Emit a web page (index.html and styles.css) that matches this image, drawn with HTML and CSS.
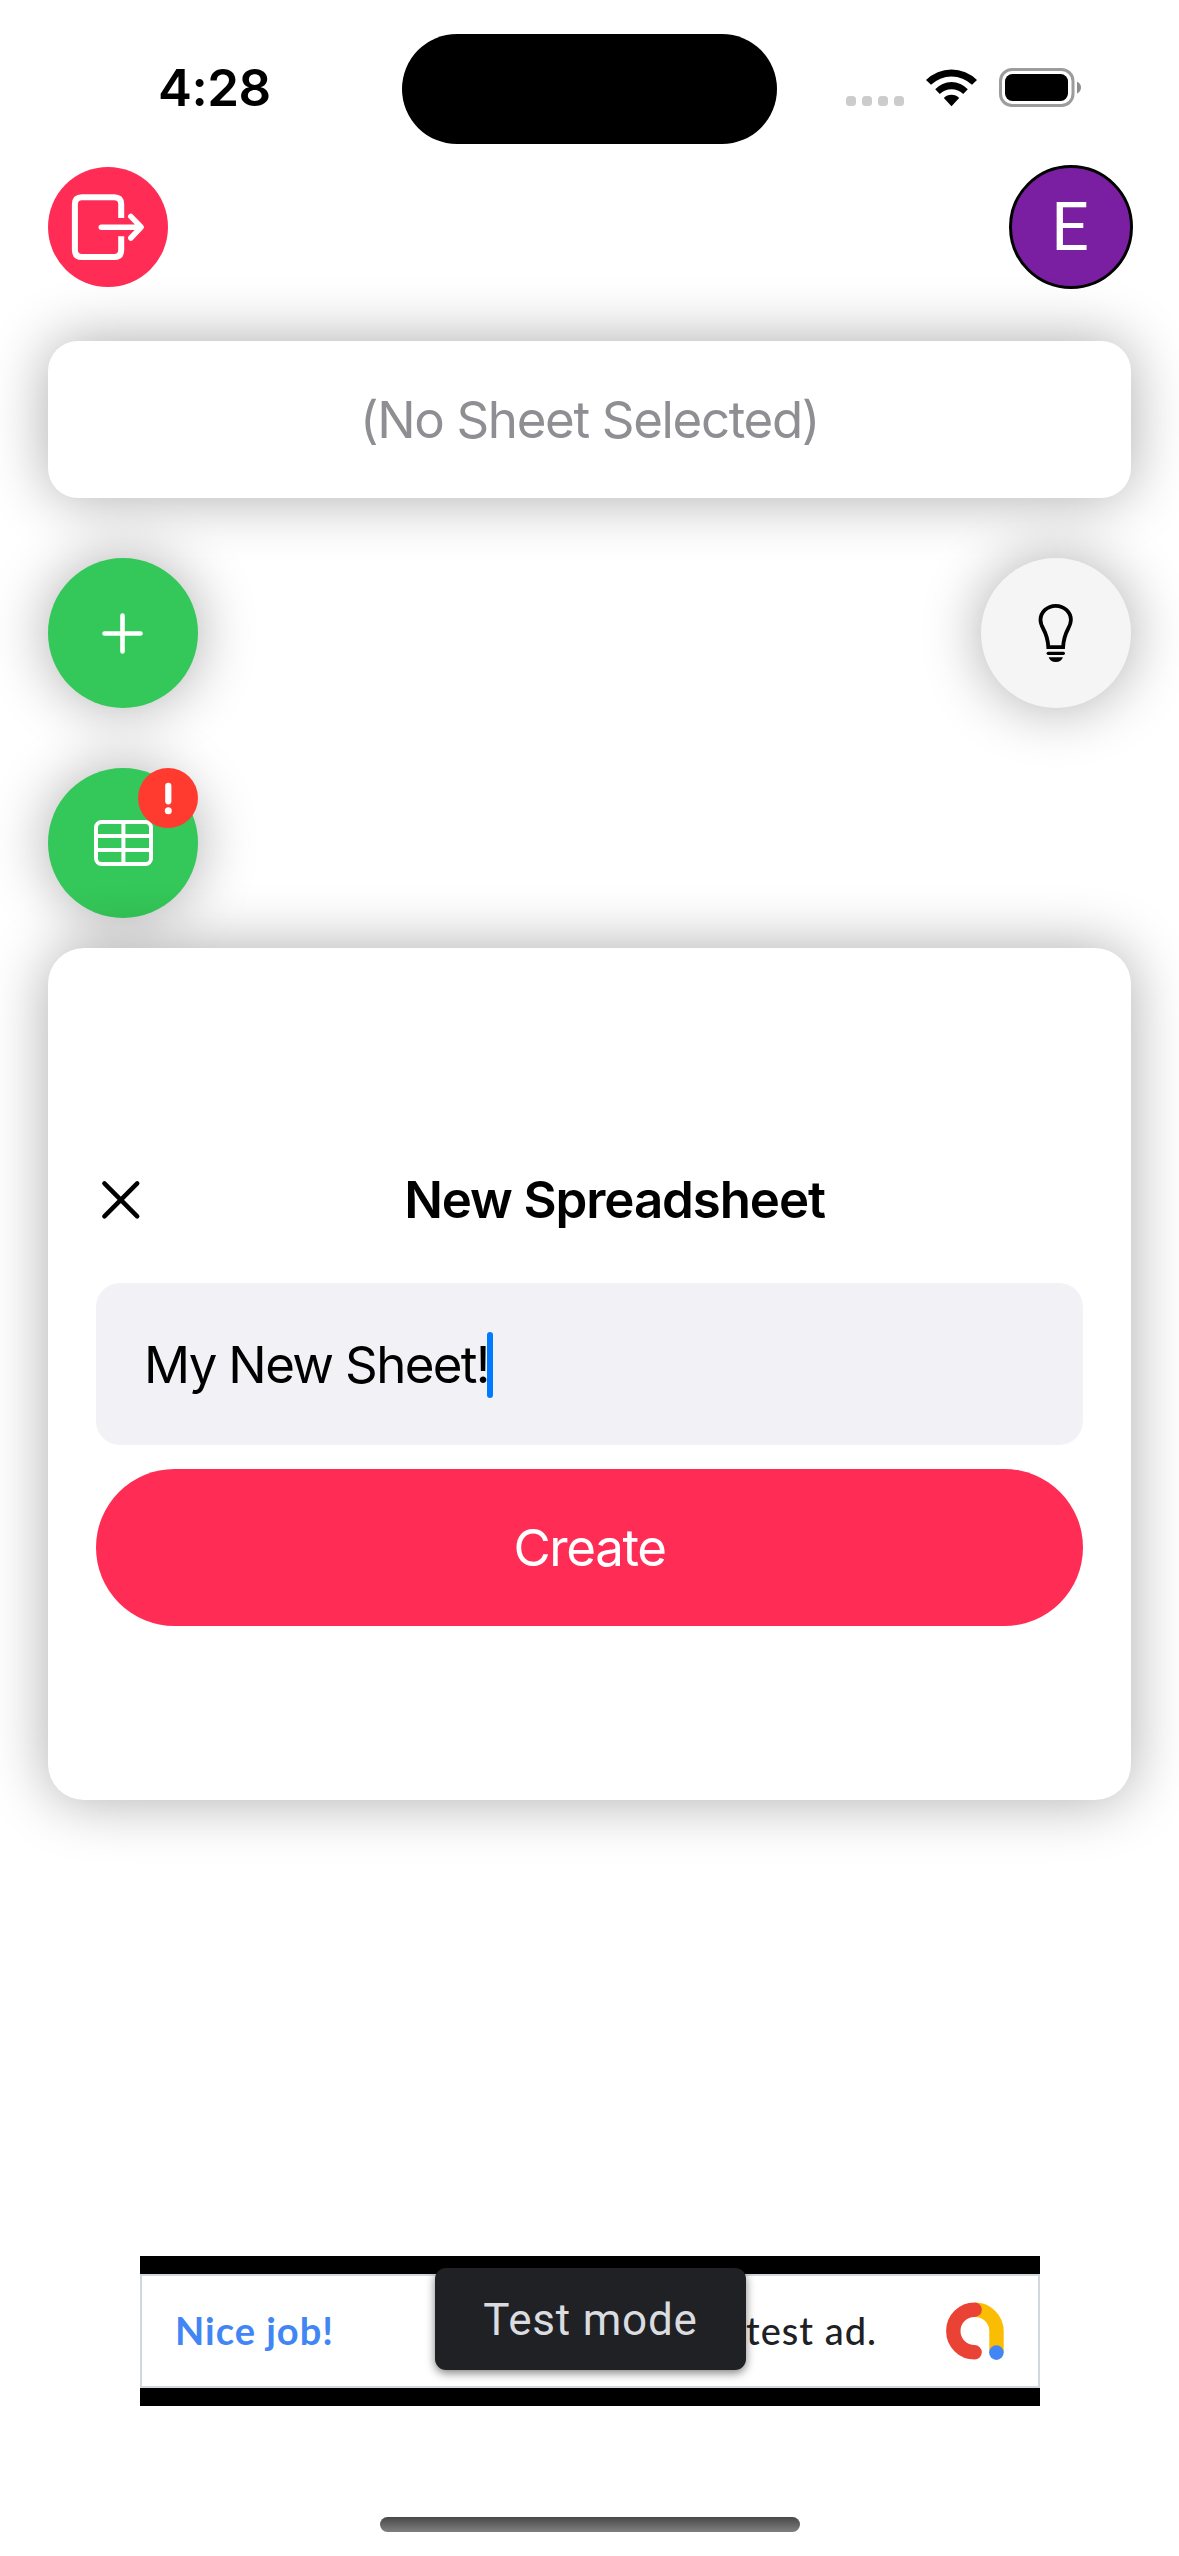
FILE: index.html
```html
<!DOCTYPE html>
<html lang="en">
<head>
<meta charset="utf-8">
<title>New Spreadsheet</title>
<link rel="stylesheet" href="styles.css">
</head>
<body>
<div class="screen">
  <header class="status">
    <div class="status-time"><span class="time">4:28</span></div>
    <div class="island"></div>
    <div class="status-icons">
      <div class="dots"><i></i><i></i><i></i><i></i></div>
      <svg class="wifi" width="51" height="38" viewBox="0 0 51 38">
        <path d="M0 11A36 36 0 0 1 51 11L46 15.8A29.7 29.7 0 0 0 5 15.8Z"/>
        <path d="M9.2 20.3A22 22 0 0 1 41.8 20.3L37.2 25A16.5 16.5 0 0 0 13.8 25Z"/>
        <path d="M17.8 29A11 11 0 0 1 33.2 29L25.5 37.2Z"/>
      </svg>
      <svg class="battery" width="83" height="40" viewBox="0 0 83 40">
        <rect x="1.5" y="1.5" width="72.5" height="36" rx="11.5" fill="none" stroke="#9c9c9c" stroke-width="3"/>
        <rect x="6" y="6" width="63" height="27" rx="7.5"/>
        <path d="M78 13.5Q82 15.5 82 19.5T78 25.5Z" fill="#8e8e8e"/>
      </svg>
    </div>
  </header>

  <nav class="topbar">
    <button class="logout" aria-label="Sign out">
      <svg width="120" height="120" viewBox="48 167 120 120" fill="none" stroke="#fff" stroke-width="6">
        <path d="M121.200 218V204.200Q121.200 197.200 114.200 197.200H81.900Q74.900 197.200 74.900 204.200V250Q74.900 257 81.900 257H114.200Q121.200 257 121.200 250V236.300"/>
        <path d="M101.300 227.200H140M130.800 216.400L141.200 227.200L130.800 238" stroke-width="5.500" stroke-linecap="round" stroke-linejoin="round"/>
      </svg>
    </button>
    <div class="avatar"><span>E</span></div>
  </nav>

  <main class="content">
    <div class="card sheet">(No Sheet Selected)</div>
    <div class="row">
      <button class="round green" aria-label="Add">
        <svg width="150" height="150" viewBox="0 0 150 150"><path d="M56.500 75.500H92.500M74.500 57.500V93.500" fill="none" stroke="#fff" stroke-width="4.600" stroke-linecap="round"/></svg>
      </button>
      <button class="round light" aria-label="Tips">
        <svg width="150" height="150" viewBox="981 558 150 150">
          <path d="M1048.300 647.200C1047.500 630 1040.500 628.500 1040.500 620A15.200 14.200 0 0 1 1070.900 620C1070.900 628.500 1063.900 630 1063.100 647.200Z" fill="none" stroke="#000" stroke-width="3.800"/>
          <path d="M1048.200 653.300H1063.400" stroke="#000" stroke-width="3.200" stroke-linecap="round"/>
          <path d="M1048.700 657.300H1062.900Q1061.500 662 1055.800 662T1048.700 657.300Z"/>
        </svg>
      </button>
    </div>
    <button class="round green sheets" aria-label="Spreadsheets">
      <svg width="150" height="150" viewBox="48 768 150 150" fill="none" stroke="#fff" stroke-width="4">
        <rect x="96" y="822" width="55" height="42" rx="5.500"/>
        <path d="M96 836H151M96 850H151M123.400 822V864"/>
      </svg>
      <span class="badge">
        <svg width="60" height="60" viewBox="138 768 60 60"><path d="M168.300 785.800V801.300" stroke="#fff" stroke-width="6.200" stroke-linecap="round"/><circle cx="168.300" cy="810.700" r="3.500" fill="#fff"/></svg>
      </span>
    </button>

    <section class="card panel">
      <div class="panel-head">
        <svg width="50" height="50" viewBox="96 1175.500 50 50"><path d="M104.400 1183.900L137.200 1216.900M137.200 1183.900L104.400 1216.900" fill="none" stroke="#000" stroke-width="4.500" stroke-linecap="round"/></svg>
        <h1><span>New Spreadsheet</span></h1>
      </div>
      <div class="field"><span class="value">My New Sheet!</span><i class="caret"></i></div>
      <button class="create"><span>Create</span></button>
    </section>
  </main>

  <aside class="ad">
    <div class="ad-body">
      <span class="nice">Nice job!</span>
      <span class="desc">test ad.</span>
      <svg class="admob" width="60" height="60" viewBox="945 2301 60 60" fill="none" stroke-width="14.400">
        <path d="M975 2309.700A21.500 21.500 0 0 1 996.500 2331.200V2352.300" stroke="#fbbc04"/>
        <path d="M974.600 2309.700A21.300 21.300 0 1 0 974.600 2352.300" stroke="#ea4335" stroke-linecap="round"/>
        <circle cx="996.400" cy="2352.600" r="7.300" fill="#4285f4"/>
      </svg>
    </div>
    <div class="test"><span>Test mode</span></div>
  </aside>
  <div class="home"></div>
</div>
</body>
</html>
```
FILE: styles.css
```css
* { box-sizing: border-box; }
body { margin: 0; background: #fff; }
.screen {
  width: 1179px;
  height: 2556px;
  overflow: hidden;
  display: flex;
  flex-direction: column;
  font-family: Inter, "Liberation Sans", sans-serif;
  font-size: 51px;
  line-height: 62px;
  color: #000;
}
button {
  border: 0;
  padding: 0;
  margin: 0;
  font: inherit;
  color: inherit;
}
svg { display: block; flex: none; }

.status {
  height: 165px;
  padding-top: 33px;
  display: grid;
  grid-template-columns: 402px 375px 402px;
  align-items: start;
}
.status-time { padding: 24px 0 0 158px; }
.time { font-weight: 600; letter-spacing: -.5px; }
.island { height: 110px; margin-top: 1px; border-radius: 55px; background: #000; }
.status-icons { display: flex; align-items: flex-start; padding: 35px 0 0 69px; }
.dots { display: flex; gap: 6px; padding-top: 28px; }
.dots i { width: 10px; height: 10px; border-radius: 3.5px; background: #ccc; }
.wifi { margin: 1px 22px 0 22px; }

.topbar {
  display: flex;
  justify-content: space-between;
  align-items: center;
  height: 124px;
  padding: 0 46px 0 48px;
}
.logout { width: 120px; height: 120px; border-radius: 50%; background: #ff2d55; }
.avatar {
  width: 124px;
  height: 124px;
  padding: 1px 2px 0 0;
  border: 3.5px solid #000;
  border-radius: 50%;
  background: #7b1fa2;
  color: #fff;
  font: 400 66px/118px Roboto, sans-serif;
  text-align: center;
}

.content { padding: 52px 48px 0; display: flex; flex-direction: column; }
.card, .round { box-shadow: 0 0 60px rgba(0, 0, 0, .33); }
.card { background: #fff; }
.sheet {
  height: 157px;
  border-radius: 30px;
  display: flex;
  align-items: center;
  justify-content: center;
  color: #8e8e93;
  letter-spacing: -1.35px;
}
.row { display: flex; justify-content: space-between; margin: 60px 0; }
.round { width: 150px; height: 150px; border-radius: 50%; }
.green { background: #34c759; }
.light { background: #f5f5f5; }
.sheets { position: relative; }
.badge {
  position: absolute;
  top: 0;
  right: 0;
  width: 60px;
  height: 60px;
  border-radius: 50%;
  background: #ff3b30;
}
.panel {
  position: relative;
  height: 852px;
  margin-top: 30px;
  padding: 221px 48px 0;
  border-radius: 36px;
}
.panel-head { display: flex; align-items: center; height: 62px; }
.panel-head h1 {
  flex: 1;
  margin: 0;
  font-size: 51px;
  font-weight: 600;
  letter-spacing: -1.1px;
  text-align: center;
}
.field {
  height: 162px;
  margin-top: 52px;
  padding: 2px 48px 0;
  display: flex;
  align-items: center;
  border-radius: 24px;
  background: #f2f1f6;
}
.value { letter-spacing: -1.65px; }
.caret { width: 6px; height: 66px; margin-left: -2px; border-radius: 3px; background: #007aff; }
.create {
  display: block;
  width: 100%;
  height: 157px;
  margin-top: 24px;
  border-radius: 79px;
  background: #ff2d55;
  color: #fff;
  letter-spacing: -1.4px;
}

.ad {
  position: relative;
  width: 900px;
  height: 150px;
  margin: 456px 0 0 140px;
  padding: 18px 0;
  background: #000;
}
.ad-body {
  height: 114px;
  border: 2px solid #d0d8dc;
  background: #fff;
  display: flex;
  align-items: center;
  padding: 0 33px;
  font: 500 38px/44px Lato, sans-serif;
}
.nice, .desc { padding-bottom: 2px; letter-spacing: 1px; }
.nice { color: #4285f4; font-weight: 700; }
.desc { margin-left: auto; color: #202124; }
.admob { margin-left: 68px; }
.test {
  position: absolute;
  left: 295px;
  top: 12px;
  width: 311px;
  height: 102px;
  border-radius: 11px;
  background: #202124;
  box-shadow: 0 3px 10px rgba(0, 0, 0, .5);
  color: #dadce0;
  font: 400 44px/104px Roboto, sans-serif;
  letter-spacing: .8px;
  text-align: center;
}
.home {
  width: 420px;
  height: 15px;
  margin: 111px 0 0 380px;
  border-radius: 8px;
  background: linear-gradient(#484848, #808080);
}
```
